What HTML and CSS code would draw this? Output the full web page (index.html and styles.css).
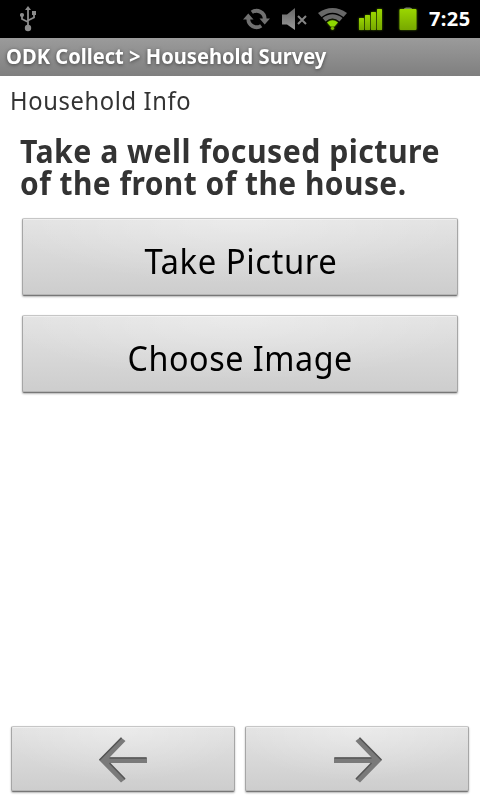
FILE: index.html
```html
<!DOCTYPE html>
<html lang="en">
<head>
<meta charset="utf-8">
<title>ODK Collect</title>
<link rel="stylesheet" href="styles.css">
</head>
<body>
<header class="status">
  <svg class="usb" width="18" height="26" viewBox="0 0 18 26" fill="none" stroke="#8c8c8c" stroke-width="1.8">
    <path d="M8 22V3M8 16L2 13V8.500M8 14.500L14 11.500V7"/>
    <path d="M8 0L11 4H5Z" fill="#8c8c8c" stroke="none"/>
    <circle cx="8" cy="22" r="3.200" fill="#8c8c8c" stroke="none"/>
    <circle cx="2" cy="9" r="2.100" fill="#8c8c8c" stroke="none"/>
    <rect x="12" y="5" width="4" height="4" fill="#8c8c8c" stroke="none"/>
  </svg>
  <svg class="tray" width="180" height="38" viewBox="240 0 180 38">
    <defs>
      <linearGradient id="green" x1="0" y1="0" x2="0" y2="1"><stop offset="0" stop-color="#9ad600"/><stop offset="1" stop-color="#77a800"/></linearGradient>
      <linearGradient id="grey" x1="0" y1="0" x2="0" y2="1"><stop offset="0" stop-color="#666"/><stop offset="1" stop-color="#999"/></linearGradient>
      <filter id="glow" x="-40%" y="-30%" width="180%" height="160%"><feDropShadow dx="0" dy="0" stdDeviation="1.300" flood-color="#78b400" flood-opacity=".65"/></filter>
    </defs>
    <g fill="none" stroke="#707070" stroke-width="3.800">
      <path d="M251.800 12.300A8.200 8.200 0 0 1 264.700 19"/>
      <path d="M261.200 25.700A8.200 8.200 0 0 1 248.300 19"/>
    </g>
    <path d="M243 19.500H253.500L248.300 13.500Z M259.500 18.500H270L264.700 24.500Z" fill="#707070"/>
    <path d="M282 14.500H287L295 8V30L287 24.500H282Z" fill="url(#grey)"/>
    <path d="M298 16L306 24M306 16L298 24" stroke="#858585" stroke-width="2"/>
    <path d="M318 13Q332.500 3 347 13L343.500 17Q332.500 8.500 321.500 17Z" fill="#686868"/>
    <path d="M322.500 18Q332.500 10.500 342.500 18L339.500 21.500Q332.500 15.500 325.500 21.500Z" fill="#686868"/>
    <g filter="url(#glow)">
      <path d="M327 22.500Q332.500 18 338 22.500L334.500 26.500H330.500Z" fill="#8dd800"/>
      <circle cx="332.500" cy="28.300" r="1.600" fill="#80b900"/>
    </g>
    <g fill="url(#green)" filter="url(#glow)">
      <rect x="359" y="18" width="5" height="12" rx=".5"/>
      <rect x="365" y="15" width="5" height="15" rx=".5"/>
      <rect x="371" y="12" width="5" height="18" rx=".5"/>
      <rect x="377" y="9" width="5" height="21" rx=".5"/>
    </g>
    <path d="M404 9V8.500L406 7.500H410L412 8.500V9Z" fill="#777"/>
    <rect x="399.500" y="9" width="17" height="21" rx="1" fill="url(#green)" filter="url(#glow)"/>
  </svg>
  <span class="clock">7:25</span>
</header>
<div class="titlebar"><h1>ODK Collect &gt; Household Survey</h1></div>
<main class="form">
  <p class="group">Household Info</p>
  <h2 class="question"><span class="line-a">Take a well focused picture</span><br><span class="line-b">of the front of the house.</span></h2>
  <button class="btn take"><span>Take Picture</span></button>
  <button class="btn choose"><span>Choose Image</span></button>
</main>
<nav class="nav">
  <button class="btn" aria-label="Previous">
    <svg width="50" height="48" viewBox="0 0 50 48">
      <path d="M1 24L23 1.500L27.500 5L11.500 21.500H49V27H11.500L27.500 43L23 46.500Z" fill="#7a7a7a"/>
      <path d="M1.500 24L23.500 1.700M11.500 22H48.500M11.500 27L27 43" fill="none" stroke="#555" stroke-width="1.500"/>
    </svg>
  </button>
  <button class="btn" aria-label="Next">
    <svg width="50" height="48" viewBox="0 0 50 48">
      <path d="M50 24L28 1.500L23.500 5L39.500 21.500H2V27H39.500L23.500 43L28 46.500Z" fill="#7a7a7a"/>
      <path d="M49.500 24L27.500 1.700M39.500 22H2.500M39.500 27L24 43" fill="none" stroke="#555" stroke-width="1.500"/>
    </svg>
  </button>
</nav>
</body>
</html>
```
FILE: styles.css
```css
* { box-sizing: border-box; }
body {
  margin: 0;
  height: 800px;
  display: flex;
  flex-direction: column;
  background: #fff;
  color: #333;
  font-family: "Noto Sans", "Open Sans", sans-serif;
  overflow: hidden;
}
h1, h2, p { margin: 0; white-space: nowrap; }
.status { height: 38px; flex: none; display: flex; background: #000; }
.usb { margin: 6px 0 0 20px; }
.tray { margin-left: 202px; flex: none; }
.clock {
  margin-left: 9px;
  color: #fff;
  font-weight: 700;
  font-size: 20px;
  line-height: 38px;
  letter-spacing: .4px;
}
.titlebar {
  height: 38px;
  flex: none;
  padding-left: 6px;
  background: linear-gradient(#9b9b9b, #7f7f7f);
}
.titlebar h1 {
  font-size: 21px;
  line-height: 37px;
  color: #fff;
  text-shadow: 0 1px 4px #444;
  transform: scaleX(.958);
  transform-origin: 0 0;
}
.form { flex: 1; padding: 0 22px; display: flex; flex-direction: column; }
.group { margin: 9px 0 0 -12px; font-size: 24.5px; line-height: 32px; letter-spacing: .65px; transform: scaleX(.968); transform-origin: 0 0; }
.question { margin: 18px 0 0 -2px; font-size: 32px; line-height: 32px; letter-spacing: .5px; }
.question span { display: inline-block; vertical-align: top; transform-origin: 0 0; }
.line-a { transform: scaleX(.945); }
.line-b { transform: scaleX(.935); }
.btn {
  display: flex;
  align-items: center;
  justify-content: center;
  padding: 0;
  border: 1px solid;
  border-color: #c6c6c6 #a6a6a6 #777 #a6a6a6;
  border-radius: 2px;
  background: radial-gradient(ellipse 55% 85% at 50% 0, rgba(255,255,255,.3), rgba(255,255,255,0)), linear-gradient(#e3e3e3, #cdcdcd);
  box-shadow: 0 1px 2px rgba(0,0,0,.3), inset 0 1px 0 rgba(255,255,255,.4), inset 0 -1px 0 #b5b5b5;
  color: #000;
  font-family: inherit;
  font-size: 35px;
  white-space: nowrap;
}
.form .btn { height: 78px; padding: 7px 0 0 1px; letter-spacing: .6px; }
.take { margin-top: 19px; }
.choose { margin-top: 19px; }
.take span { transform: scaleX(.938); }
.choose span { transform: scaleX(.922); }
.nav { flex: none; display: flex; gap: 10px; padding: 0 11px 8px; }
.nav .btn { flex: 1; height: 66px; padding-top: 2px; }
```
